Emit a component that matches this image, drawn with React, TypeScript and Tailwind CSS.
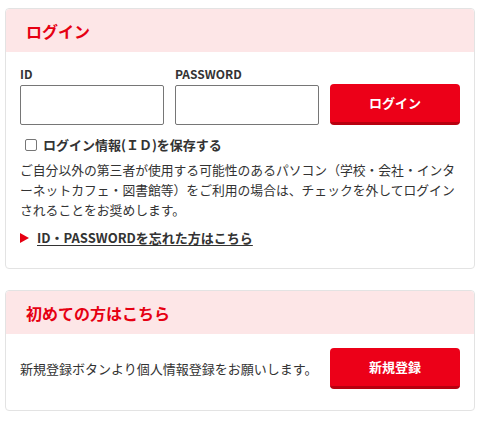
import React from 'react';

const font = { fontFamily: '"Noto Sans CJK JP", "Noto Sans", sans-serif' };

const Header = ({ title }: { title: string }) => (
  <div className="h-[43px] bg-[#fde6e7] px-[20px] flex items-center rounded-t-[4px]">
    <h2 className="text-[16px] font-bold text-[#e60012] leading-none">{title}</h2>
  </div>
);

const RedButton = ({ label }: { label: string }) => (
  <button className="w-[130px] h-[41px] bg-[#ec0018] border-b-[3px] border-[#b8000f] rounded-[4px] text-white text-[13px] font-bold flex items-center justify-center">
    {label}
  </button>
);

const App: React.FC = () => {
  return (
    <div className="w-[483px] h-[426px] bg-white pt-[8px] pl-[5px] text-[#333]" style={font}>
      <section className="w-[470px] border border-[#e3e3e3] rounded-[4px] bg-white">
        <Header title="ログイン" />
        <div className="px-[14px] pt-[14px] pb-[20px]">
          <div className="flex items-end gap-[11px]">
            <div className="w-[144px]">
              <label className="block text-[12px] font-bold leading-[16px] mb-[3px]">ID</label>
              <input className="w-[144px] h-[40px] border border-[#767676] rounded-[2px] bg-white" />
            </div>
            <div className="w-[144px]">
              <label className="block text-[12px] font-bold leading-[16px] mb-[3px]">PASSWORD</label>
              <input type="password" className="w-[144px] h-[40px] border border-[#767676] rounded-[2px] bg-white" />
            </div>
            <RedButton label="ログイン" />
          </div>

          <label className="mt-[10px] h-[20px] flex items-center gap-[6px] pl-[5px]">
            <span className="w-[12px] h-[12px] border border-[#767676] rounded-[2px] bg-white" />
            <span className="text-[13px] font-bold">ログイン情報(ＩＤ)を保存する</span>
          </label>

          <p className="mt-[5px] text-[12.8px] leading-[20px] whitespace-nowrap">
            ご自分以外の第三者が使用する可能性のあるパソコン（学校・会社・インタ<br />
            ーネットカフェ・図書館等）をご利用の場合は、チェックを外してログイン<br />
            されることをお奨めします。
          </p>

          <a href="#" className="mt-[8px] h-[20px] flex items-center gap-[8px]">
            <svg width="9" height="10" viewBox="0 0 9 10">
              <path d="M0 0 L9 5 L0 10 Z" fill="#e60012" />
            </svg>
            <span className="text-[13px] font-bold underline underline-offset-2">ID・PASSWORDを忘れた方はこちら</span>
          </a>
        </div>
      </section>

      <section className="mt-[21px] w-[470px] border border-[#e3e3e3] rounded-[4px] bg-white">
        <Header title="初めての方はこちら" />
        <div className="px-[14px] pt-[14px] pb-[21px] flex items-center justify-between">
          <p className="text-[13px]">新規登録ボタンより個人情報登録をお願いします。</p>
          <RedButton label="新規登録" />
        </div>
      </section>
    </div>
  );
};

export default App;
